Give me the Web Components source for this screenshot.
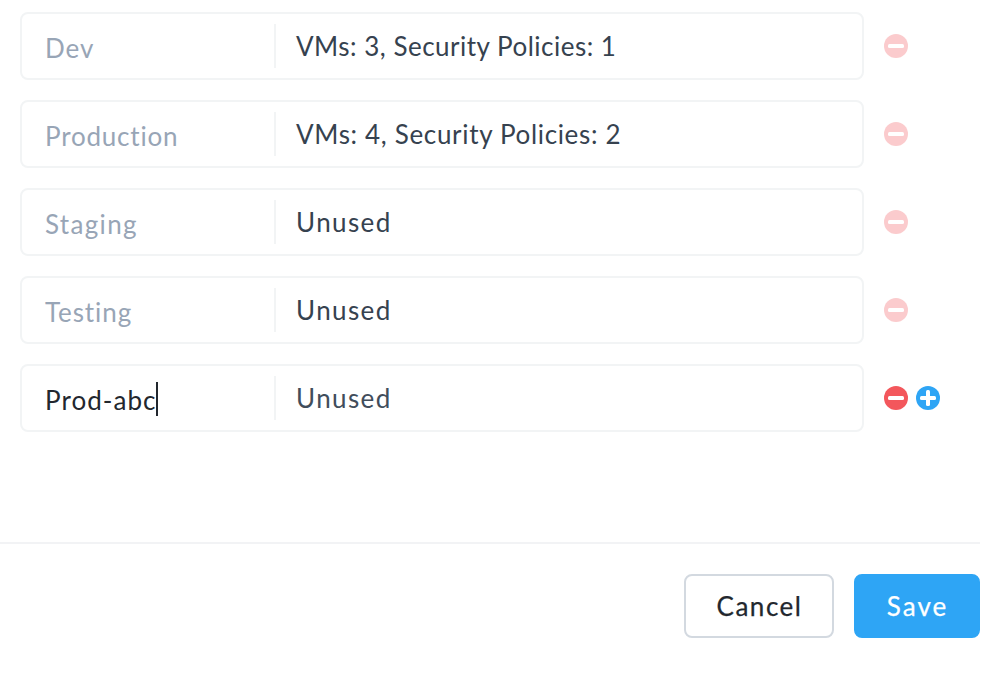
<!DOCTYPE html>
<html lang="en"><head><meta charset="utf-8"><title>Values</title>
<style>
html,body{margin:0;height:100%;background:#fff;overflow:hidden}
body{font-family:Lato,"Liberation Sans",sans-serif;font-size:26px;color:#36424f}
</style></head><body>
<category-editor>
<value-row name="Dev" style="--name-space:.98px;--usage-space:.5px">VMs: 3, Security Policies: 1</value-row>
<value-row name="Production" style="--name-space:.8px;--usage-space:.67px">VMs: 4, Security Policies: 2</value-row>
<value-row name="Staging" style="--name-space:1.33px">Unused</value-row>
<value-row name="Testing" style="--name-space:.9px">Unused</value-row>
<value-row name="Prod-abc" active style="--name-space:1.05px">Unused</value-row>
<action-button slot="actions" style="width:150px;letter-spacing:1.5px">Cancel</action-button>
<action-button slot="actions" primary style="width:126px;letter-spacing:2px">Save</action-button>
</category-editor>
<script>
class CategoryEditor extends HTMLElement{
  constructor(){super();this.attachShadow({mode:'open'}).innerHTML=`
<style>
:host{display:flex;flex-direction:column;width:980px;height:676px;box-sizing:border-box}
main{display:flex;flex-direction:column;gap:20px;height:542px;box-sizing:border-box;padding:12px 0 0 20px}
footer{display:flex;justify-content:flex-end;gap:20px;border-top:2px solid #f2f3f5;padding-top:30px}
</style><main><slot></slot></main><footer><slot name="actions"></slot></footer>`}
}
class RoundIcon extends HTMLElement{
  connectedCallback(){
    const plus=this.getAttribute('kind')==='plus';
    this.attachShadow({mode:'open'}).innerHTML=`
<style>:host{display:block;width:24px;height:24px}svg{display:block}</style>
<svg width="24" height="24" viewBox="0 0 24 24"><circle cx="12" cy="12" r="12" fill="${plus?'#2ea5f5':'#f3575c'}"/><rect x="4" y="10" width="16" height="4" rx="1.5" fill="#fff"/>${plus?'<rect x="10" y="4" width="4" height="16" rx="1.5" fill="#fff"/>':''}</svg>`}
}
class ValueRow extends HTMLElement{
  connectedCallback(){
    const active=this.hasAttribute('active');
    this.attachShadow({mode:'open'}).innerHTML=`
<style>
:host{display:flex;align-items:center;height:68px;line-height:32px;white-space:nowrap}
.field{display:flex;align-items:center;box-sizing:border-box;width:844px;height:68px;border:2px solid #f2f4f5;border-radius:8px}
.name{display:flex;align-items:center;box-sizing:border-box;width:254px;height:44px;border-right:2px solid #f2f4f5;padding:4px 0 0 23px;color:#98a5b6;letter-spacing:var(--name-space)}
:host([active]) .name{color:#22272e}
.caret{width:2px;height:34px;background:#22272e;margin:-2px 0 0 -1px}
.usage{padding-left:20px;letter-spacing:var(--usage-space,1.4px)}
:host([active]) .usage{color:#414d5b}
.icons{display:flex;gap:8px;margin-left:20px;opacity:.3}
:host([active]) .icons{opacity:1}
</style>
<div class="field"><div class="name"><span></span>${active?'<i class="caret"></i>':''}</div><div class="usage"><slot></slot></div></div>
<div class="icons"><round-icon kind="minus"></round-icon>${active?'<round-icon kind="plus"></round-icon>':''}</div>`;
    this.shadowRoot.querySelector('span').textContent=this.getAttribute('name')}
}
class ActionButton extends HTMLElement{
  constructor(){super();this.attachShadow({mode:'open'}).innerHTML=`
<style>
:host{display:flex;align-items:center;justify-content:center;box-sizing:border-box;height:64px;border:2px solid #d3d9e0;border-radius:8px;color:#22272e;line-height:32px;padding:0 0 0 1px;-webkit-text-stroke:.25px currentColor}
:host([primary]){background:#2ea5f5;border-color:#2ea5f5;color:#fff}
</style><slot></slot>`}
}
customElements.define('round-icon',RoundIcon);
customElements.define('value-row',ValueRow);
customElements.define('action-button',ActionButton);
customElements.define('category-editor',CategoryEditor);
</script></body></html>
